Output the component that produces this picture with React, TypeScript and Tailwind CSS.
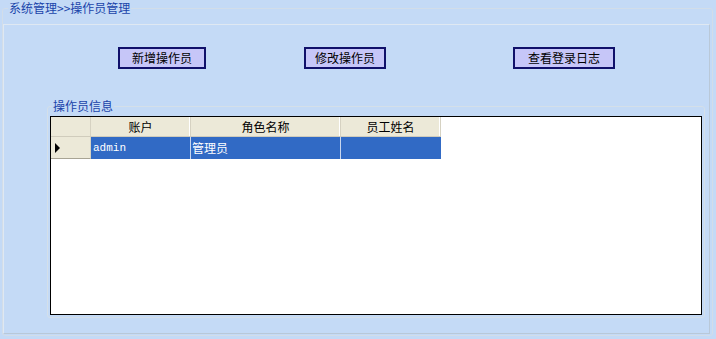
import React from 'react';

const cjk = '"Noto Sans CJK SC", "Liberation Sans", sans-serif';

const columns = [
  { label: '账户', width: 'w-[100px]' },
  { label: '角色名称', width: 'w-[150px]' },
  { label: '员工姓名', width: 'w-[100px]' },
];

const rows = [{ account: 'admin', role: '管理员', name: '' }];

function NavButton({ label, className }: { label: string; className: string }) {
  return (
    <button
      type="button"
      className={`h-[22px] border-2 border-[#10106a] bg-[#c6c6f8] text-[12px] leading-none text-black ${className}`}
    >
      {label}
    </button>
  );
}

export default function App() {
  return (
    <div className="w-[716px] h-[339px] overflow-hidden bg-[#c4daf6]" style={{ fontFamily: cjk }}>
      <fieldset className="ml-[2px] w-[711px] h-[336px] border border-[#d2dde9] rounded-[3px]">
        <legend className="ml-[5px] px-[1px] text-[12px] leading-[16px] text-[#1a44aa]">
          系统管理&gt;&gt;操作员管理
        </legend>

        <div className="mt-[8px] w-[707px] h-[310px] border border-t-[#dfe8f2] border-l-[#dfe8f2] border-r-[#b9c8d8] border-b-[#b9c8d8]">
          <div className="mt-[22px] flex">
            <NavButton label="新增操作员" className="ml-[114px] w-[88px]" />
            <NavButton label="修改操作员" className="ml-[98px] w-[82px]" />
            <NavButton label="查看登录日志" className="ml-[127px] w-[102px]" />
          </div>

          <fieldset className="mt-[29px] ml-[43px] w-[658px] h-[220px] border border-[#d4dfe9] rounded-[3px]">
            <legend className="ml-[4px] px-[1px] text-[12px] leading-[16px] text-[#1a44aa]">操作员信息</legend>

            <div className="mt-[2px] ml-[2px] w-[652px] h-[199px] border-[1.5px] border-black bg-white">
              <div className="flex h-[20px] bg-[#ece9d8] w-[390px] border-b border-[#d0ccbc]">
                <div className="w-[40px] border-r border-[#d6d2c2]" />
                {columns.map(c => (
                  <div
                    key={c.label}
                    className={`${c.width} flex items-center justify-center text-[12px] leading-none text-black border-r border-[#d6d2c2] shadow-[inset_-1px_0_0_#fff]`}
                  >
                    {c.label}
                  </div>
                ))}
              </div>
              {rows.map(r => (
                <div key={r.account} className="flex h-[22px] w-[390px]">
                  <div className="w-[40px] flex items-center pl-[3px] bg-[#ece9d8] border-b border-[#a8a494] border-r border-r-[#d6d2c2]">
                    <svg width="7" height="10" viewBox="0 0 7 10">
                      <path d="M1 0 L6 5 L1 10 Z" fill="#000" />
                    </svg>
                  </div>
                  <div
                    className="w-[100px] flex items-center pl-[2px] bg-[#316ac5] text-white text-[11px] border-r border-[#c8d6ee]"
                    style={{ fontFamily: '"Liberation Mono", monospace' }}
                  >
                    {r.account}
                  </div>
                  <div className="w-[150px] flex items-center pl-[1px] bg-[#316ac5] text-white text-[12px] border-r border-[#c8d6ee]">
                    {r.role}
                  </div>
                  <div className="w-[100px] flex items-center bg-[#316ac5] text-white text-[12px]">{r.name}</div>
                </div>
              ))}
            </div>
          </fieldset>
        </div>
      </fieldset>
    </div>
  );
}
